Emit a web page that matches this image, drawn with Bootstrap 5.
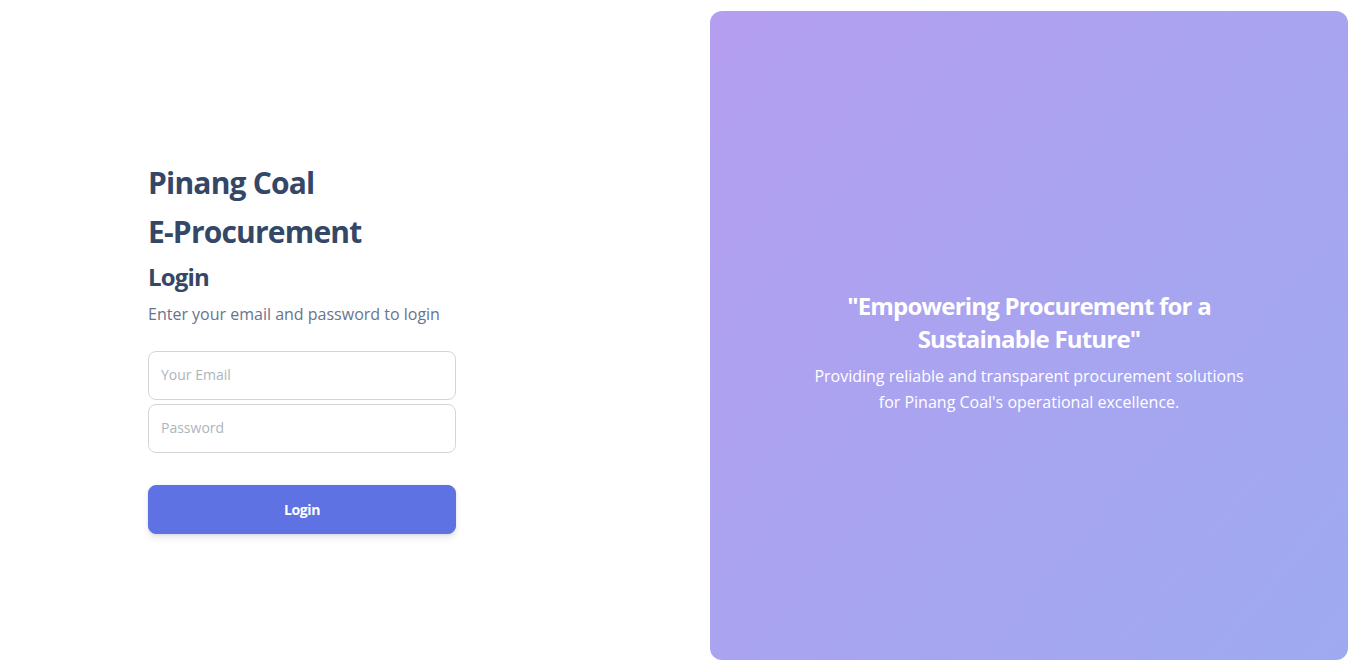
<!DOCTYPE html>
<html lang="en">
<head>
<meta charset="utf-8">
<meta name="viewport" content="width=device-width, initial-scale=1">
<title>Pinang Coal E-Procurement</title>
<link href="https://cdn.jsdelivr.net/npm/bootstrap@5.3.0/dist/css/bootstrap.min.css" rel="stylesheet">
<style>
body{font-family:"Open Sans",sans-serif;color:#67748e;line-height:26px;background:#fff}
h1,h2{color:#344767;font-weight:700;letter-spacing:-.8px}
.login-panel{padding:23px 16px 0}
.login-form{max-width:308px}
.brand-title{font-size:30px;line-height:41px}
.login-title{font-size:24px;line-height:33px}
.login-input{font-size:14px;line-height:20px;padding:13px 12px 14px;border-color:#d2d6da;border-radius:8px;color:#495057}
.login-input::placeholder{color:#adb5bd}
.login-btn{--bs-btn-bg:#5e72e4;--bs-btn-border-color:#5e72e4;--bs-btn-hover-bg:#5e72e4;--bs-btn-color:#fff;--bs-btn-hover-color:#fff;margin-top:32px;padding:13px 24px;font-size:14px;line-height:21px;font-weight:700;letter-spacing:-.35px;border-radius:8px;box-shadow:0 4px 6px rgba(50,50,93,.1),0 1px 3px rgba(0,0,0,.08)}
.promo{margin:11px 14px 12px 29px;background:linear-gradient(310deg,#9eaaef,#b49eef);border-radius:12px;padding:32px 96px 0}
.promo h2{color:#fff;font-size:24px;line-height:33px}
@media (min-width:992px){.login-panel{padding-left:148px}}
</style>
</head>
<body>
<main class="container-fluid min-vh-100 d-flex flex-column p-0">
<div class="row g-0 flex-fill">
<section class="login-panel col-12 col-lg-6 d-flex flex-column justify-content-center">
<div class="login-form w-100">
<h1 class="brand-title mb-2">Pinang Coal</h1>
<h1 class="brand-title mb-2">E-Procurement</h1>
<h2 class="login-title mb-2">Login</h2>
<p class="mb-4">Enter your email and password to login</p>
<form>
<input class="form-control login-input mb-1" type="email" placeholder="Your Email" aria-label="Your Email">
<input class="form-control login-input" type="password" placeholder="Password" aria-label="Password">
<button class="btn login-btn w-100" type="submit">Login</button>
</form>
</div>
</section>
<aside class="col-lg-6 d-none d-lg-flex">
<div class="promo flex-fill d-flex flex-column justify-content-center text-center text-white">
<h2 class="mb-2">"Empowering Procurement for a Sustainable Future"</h2>
<p class="mb-0">Providing reliable and transparent procurement solutions for Pinang Coal's operational excellence.</p>
</div>
</aside>
</div>
</main>
<script src="https://cdn.jsdelivr.net/npm/bootstrap@5.3.0/dist/js/bootstrap.bundle.min.js"></script>
</body>
</html>
